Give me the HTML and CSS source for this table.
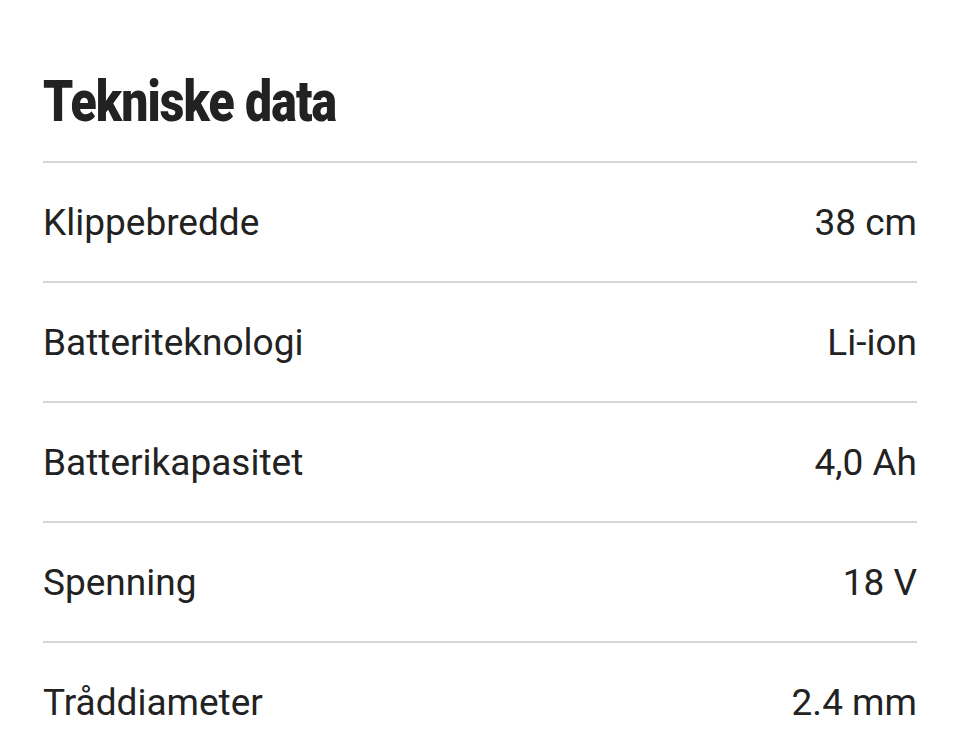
FILE: index.html
```html
<!DOCTYPE html>
<html lang="no">
<head>
<meta charset="utf-8">
<link rel="stylesheet" href="styles.css">
</head>
<body>
<section class="specs">
  <h2 class="specs-title"><span class="specs-title-text">Tekniske data</span></h2>
  <dl class="specs-list">
    <div class="spec-row"><dt>Klippebredde</dt><dd>38 cm</dd></div>
    <div class="spec-row"><dt>Batteriteknologi</dt><dd>Li-ion</dd></div>
    <div class="spec-row"><dt>Batterikapasitet</dt><dd>4,0 Ah</dd></div>
    <div class="spec-row"><dt>Spenning</dt><dd>18 V</dd></div>
    <div class="spec-row"><dt>Tråddiameter</dt><dd>2.4 mm</dd></div>
  </dl>
</section>
</body>
</html>
```
FILE: styles.css
```css
html, body {
  margin: 0;
  padding: 0;
  background: #fff;
}
body {
  font-family: Roboto, "Noto Sans", sans-serif;
  color: #222;
}
.specs {
  padding: 0 43px;
}
.specs-title {
  margin: 0;
  height: 161px;
  box-sizing: border-box;
  padding-top: 70px;
  font-family: Roboto, sans-serif;
  font-weight: 900;
  font-size: 57px;
  line-height: 64px;
  letter-spacing: -1px;
  color: #222;
}
.specs-title-text {
  display: inline-block;
  transform: scaleX(0.843);
  transform-origin: left center;
  white-space: nowrap;
}
.specs-list {
  margin: 0;
  border-top: 2px solid #d8d8d8;
}
.spec-row {
  display: flex;
  justify-content: space-between;
  align-items: center;
  height: 118px;
  border-bottom: 2px solid #d8d8d8;
  font-size: 37px;
}
.spec-row dt, .spec-row dd {
  margin: 0;
}
```
